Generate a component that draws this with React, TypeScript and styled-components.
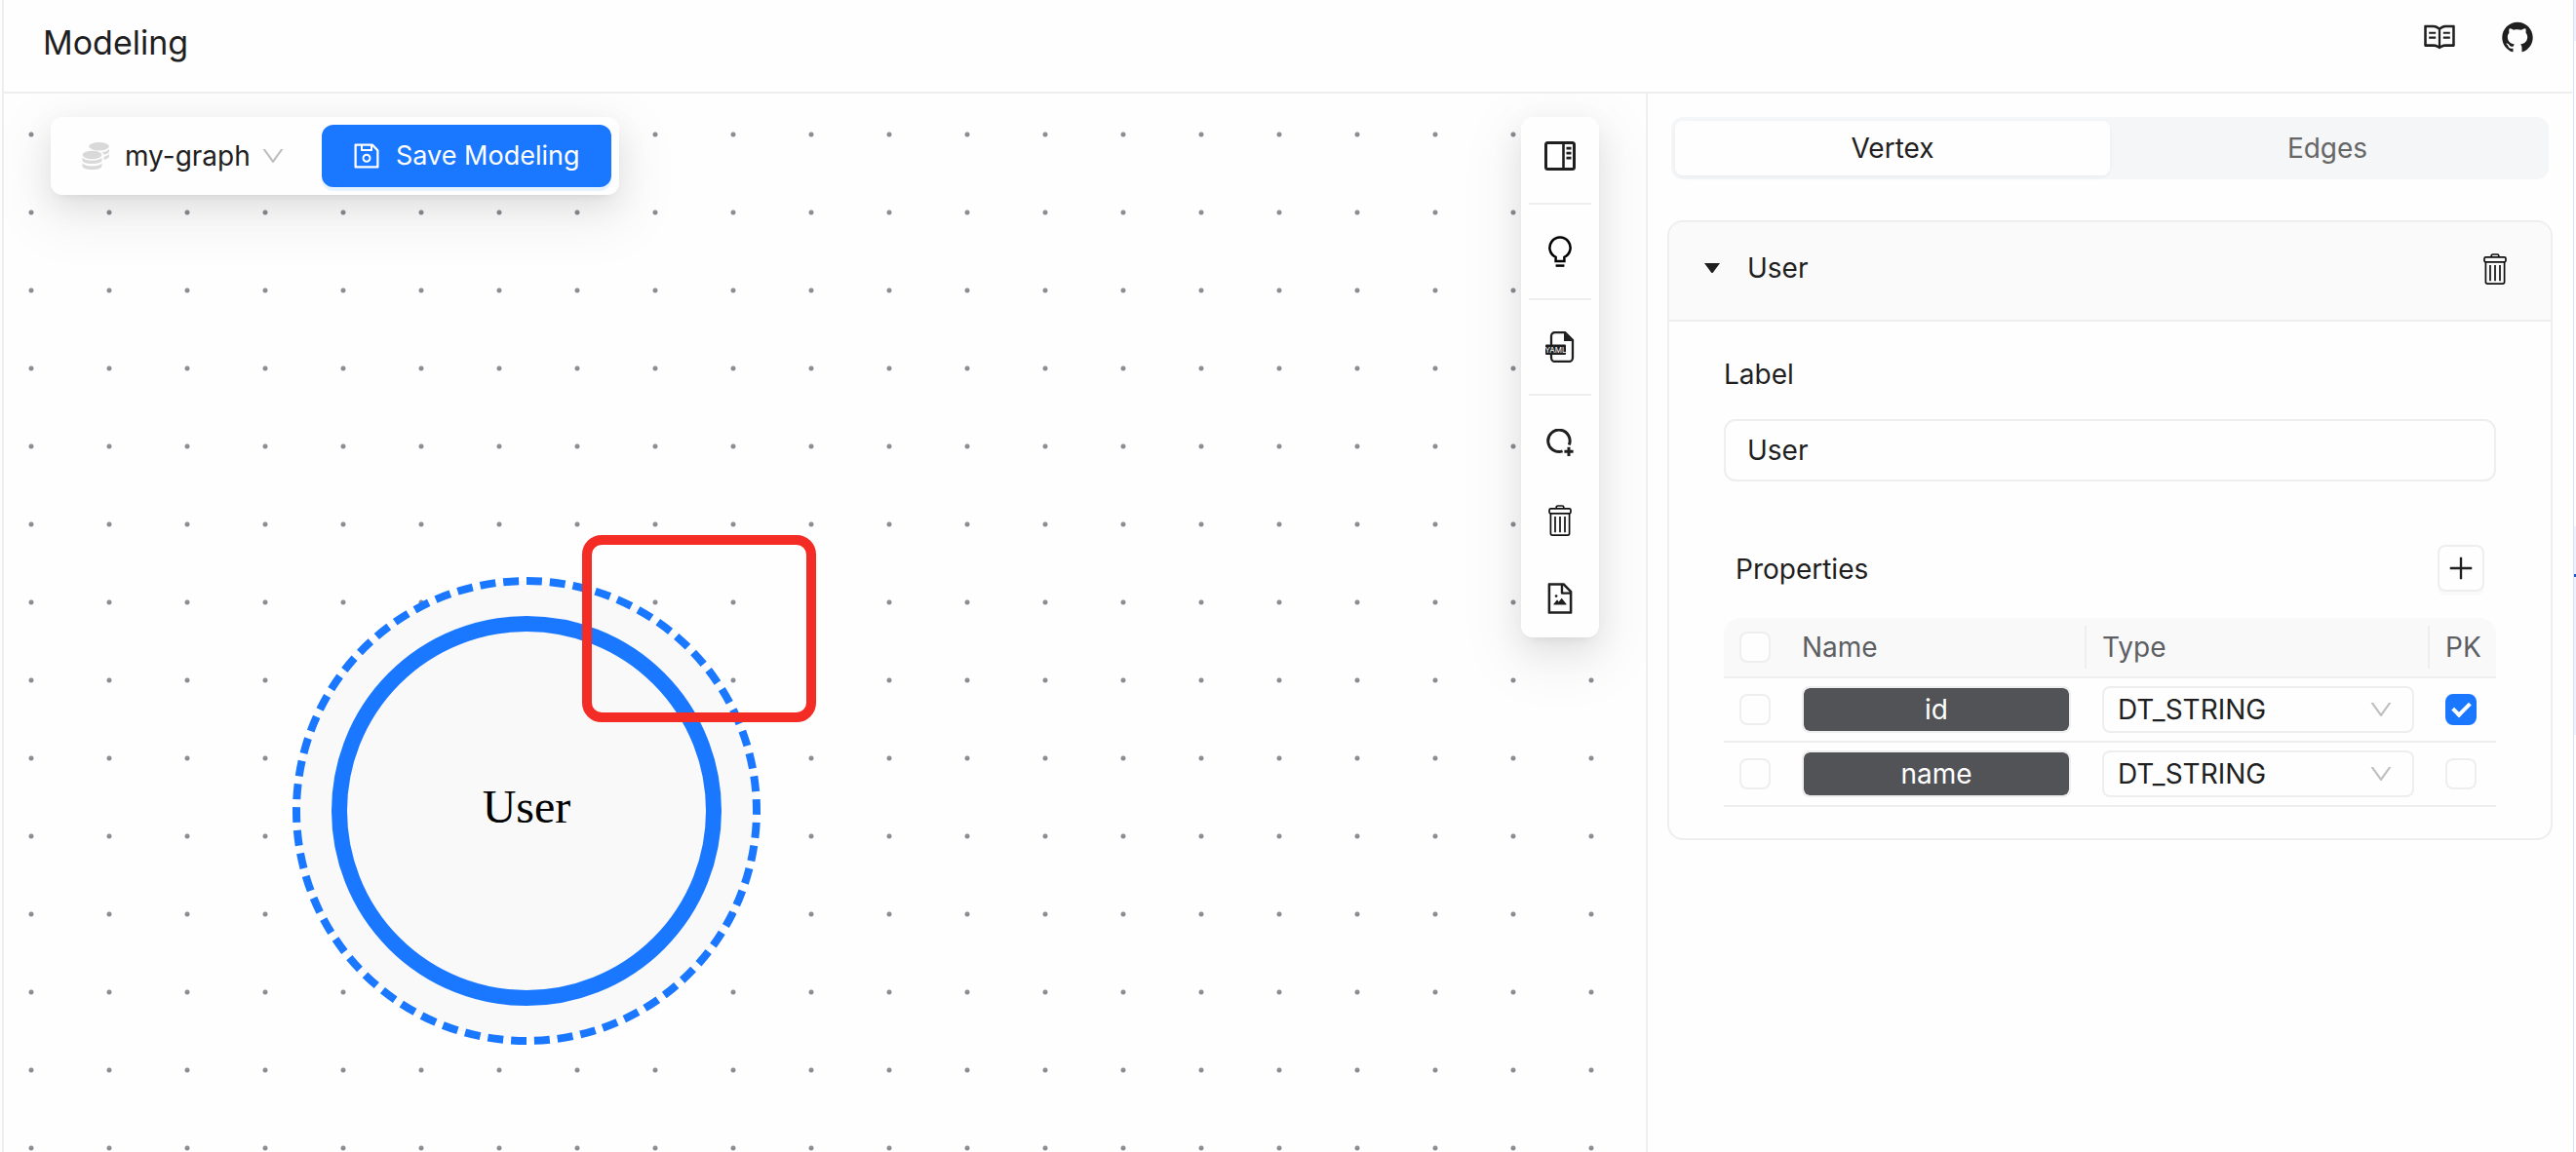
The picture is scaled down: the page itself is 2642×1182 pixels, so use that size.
import React, { useState } from 'react';
import styled, { createGlobalStyle } from 'styled-components';
import {
  AiFillGithub,
  AiOutlineDown,
  AiOutlineFileImage,
  AiOutlinePlus,
  AiOutlineRead,
  AiOutlineSave,
} from 'react-icons/ai';

const line = '#eeeeee';
const ink = '#1f1f1f';
const primary = '#1a77ff';
const floatShadow =
  '0 12px 32px rgba(0, 0, 0, 0.08), 0 6px 12px -8px rgba(0, 0, 0, 0.12), 0 18px 56px 16px rgba(0, 0, 0, 0.05)';

const GlobalStyle = createGlobalStyle`
  *, *::before, *::after { box-sizing: border-box; }
  body {
    margin: 0;
    background: #fefefe;
    color: ${ink};
    font-family: Inter, "Liberation Sans", sans-serif;
    font-size: 28px;
    line-height: 44px;
  }
  button, input, select { font: inherit; color: inherit; margin: 0; }
  button { padding: 0; border: 0; background: none; cursor: pointer; }
  svg { display: block; }
`;

const Window = styled.div`
  display: flex;
  min-height: 100vh;
  padding-left: 2px;
`;

const Page = styled.div`
  flex: 1;
  min-width: 0;
  display: flex;
  flex-direction: column;
  border-left: 2px solid ${line};
`;

const WindowEdge = styled.div`
  width: 3px;
  margin-left: 1px;
  border-left: 1px solid #d5e1fb;
  background: linear-gradient(#edf2fe 42px, #fdfeff 42px 540px, #edf2fe 540px 589px, #1d54c4 589px 592px, #edf2fe 592px 754px, #fdfeff 754px);
`;

const Header = styled.header`
  display: flex;
  justify-content: space-between;
  height: 96px;
  padding: 0 38px 0 40px;
  border-bottom: 2px solid ${line};
`;

const Title = styled.h1`
  margin: 0;
  font-size: 34px;
  font-weight: 400;
  line-height: 88px;
`;

const HeaderLinks = styled.nav`
  display: flex;
  gap: 44px;
  padding-top: 20px;
`;

const HeaderLink = styled.a`
  width: 36px;
  height: 36px;
  color: ${ink};
`;

const Body = styled.div`
  flex: 1;
  display: flex;
`;

const Canvas = styled.main`
  position: relative;
  flex: 1;
  min-width: 0;
  overflow: hidden;
  display: flex;
  justify-content: space-between;
  align-items: flex-start;
  padding: 24px 48px;
  background: radial-gradient(circle at 28px 42px, #8b8b95 2px, rgba(145, 145, 154, 0) 3px) 0 0 / 80px 80px;
`;

const NodeDrawing = styled.svg`
  position: absolute;
  left: 296px;
  top: 496px;
`;

const NodeName = styled.text`
  font-family: "Liberation Serif", "Times New Roman", serif;
  font-size: 48px;
  text-anchor: middle;
  fill: #000;
`;

const Highlight = styled.div`
  position: absolute;
  left: 593px;
  top: 453px;
  width: 240px;
  height: 192px;
  border: 10px solid #f32d25;
  border-radius: 20px;
`;

const GraphBar = styled.div`
  position: relative;
  display: flex;
  align-items: center;
  padding: 8px;
  border-radius: 12px;
  background: #fefefe;
  box-shadow: ${floatShadow};
`;

const GraphPicker = styled.label`
  display: grid;
  grid-template-columns: 68px 138px 64px;
  align-items: center;
  height: 64px;
  color: #bfbfbf;

  > svg { grid-row: 1; pointer-events: none; }
  > svg:first-child { grid-column: 1; margin-left: 24px; }
  > svg:last-child { grid-column: 3; }
`;

const PlainSelect = styled.select`
  grid-row: 1;
  grid-column: 1 / -1;
  height: 64px;
  padding: 0 0 0 68px;
  border: 0;
  background: none;
  appearance: none;
  color: ${ink};
  outline: 0;
`;

const SaveButton = styled.button`
  display: flex;
  align-items: center;
  gap: 14px;
  height: 64px;
  padding: 0 32px 0 30px;
  border-radius: 12px;
  background: ${primary};
  box-shadow: 0 4px 0 rgba(5, 145, 255, 0.1);
  color: #fff;
  font-size: 27px;
`;

const ToolRail = styled.div`
  position: relative;
  display: flex;
  flex-direction: column;
  width: 80px;
  border-radius: 12px;
  background: #fefefe;
  box-shadow: ${floatShadow};
`;

const ToolButton = styled.button`
  display: grid;
  place-items: center;
  height: 80px;
`;

const RailDivider = styled.hr`
  width: 64px;
  height: 2px;
  margin: 8px;
  border: 0;
  background: ${line};
`;

const Panel = styled.aside`
  flex: 0 0 950px;
  padding: 24px 20px;
  border-left: 2px solid ${line};
`;

const Segmented = styled.div`
  display: flex;
  margin: 0 4px 42px;
  padding: 4px;
  border-radius: 12px;
  background: #f4f6f8;
`;

const Segment = styled.button<{ $active: boolean }>`
  flex: 1;
  height: 56px;
  border-radius: 8px;
  background: ${(p) => (p.$active ? '#fefefe' : 'transparent')};
  box-shadow: ${(p) => (p.$active ? '0 2px 4px rgba(0, 0, 0, 0.03), 0 2px 12px -2px rgba(0, 0, 0, 0.02)' : 'none')};
  color: ${(p) => (p.$active ? ink : '#666666')};
`;

const Card = styled.section`
  border: 2px solid ${line};
  border-radius: 16px;
  overflow: hidden;
`;

const CardHeader = styled.header`
  display: flex;
  justify-content: space-between;
  align-items: center;
  height: 102px;
  padding: 0 45px 0 36px;
  border-bottom: 2px solid ${line};
  background: #fafafa;
`;

const CardToggle = styled.button`
  display: flex;
  align-items: center;
  gap: 28px;
  padding-bottom: 7px;
`;

const IconButton = styled.button`
  display: grid;
  place-items: center;
  padding-bottom: 4px;
`;

const CardBody = styled.div`
  display: flex;
  flex-direction: column;
  padding: 32px 56px;
`;

const FieldLabel = styled.label`
  margin-bottom: 24px;
`;

const TextInput = styled.input`
  width: 100%;
  height: 64px;
  padding: 0 22px;
  border: 2px solid ${line};
  border-radius: 12px;
  background: none;
  outline: 0;
`;

const PropertiesBar = styled.div`
  display: flex;
  justify-content: space-between;
  align-items: center;
  margin: 65px 0 27px;
  padding: 0 12px;
`;

const PropertiesTitle = styled.h2`
  margin: 0;
  font-size: 28px;
  font-weight: 400;
  line-height: 46px;
  padding-top: 2px;
`;

const AddButton = styled.button`
  display: grid;
  place-items: center;
  width: 48px;
  height: 48px;
  border: 2px solid ${line};
  border-radius: 8px;
  box-shadow: 0 4px 0 rgba(0, 0, 0, 0.02);
`;

const Table = styled.table`
  width: 100%;
  border-collapse: separate;
  border-spacing: 0;
  table-layout: fixed;
`;

const SelectionCol = styled.col`width: 64px;`;
const NameCol = styled.col`width: 308px;`;
const KeyCol = styled.col`width: 68px;`;

const HeadCell = styled.th<{ $divided?: boolean }>`
  height: 62px;
  padding: 0 16px;
  border-bottom: 2px solid ${line};
  background: ${(p) =>
    p.$divided ? `linear-gradient(${line}, ${line}) right 8px / 2px 44px no-repeat, #f9f9f9` : '#f9f9f9'};
  color: #5c5f63;
  font-weight: 400;
  text-align: left;

  &:first-child { border-top-left-radius: 16px; }
  &:last-child { border-top-right-radius: 16px; }
`;

const Cell = styled.td`
  height: 66px;
  padding: 0 16px;
  border-bottom: 2px solid ${line};
`;

const Checkbox = styled.input.attrs({ type: 'checkbox' })`
  display: block;
  width: 32px;
  height: 32px;
  border: 2px solid ${line};
  border-radius: 8px;
  background: #fefefe;
  appearance: none;

  &:checked {
    display: grid;
    place-items: center;
    border-color: ${primary};
    background: ${primary};
  }
  &:checked::after {
    content: '';
    width: 11px;
    height: 18px;
    margin-bottom: 4px;
    border: solid #fff;
    border-width: 0 4px 4px 0;
    transform: rotate(45deg);
  }
`;

const NameInput = styled.input`
  display: block;
  width: 100%;
  height: 48px;
  padding: 0;
  border: 2px solid ${line};
  border-radius: 8px;
  background: #525357;
  background-clip: padding-box;
  color: #fff;
  text-align: center;
  outline: 0;
`;

const TypePicker = styled.div`
  display: grid;
  grid-template-columns: 1fr 48px;
  align-items: center;
  color: #bfbfbf;

  > svg { grid-area: 1 / 2; pointer-events: none; }
`;

const TypeSelect = styled.select`
  grid-area: 1 / 1 / 2 / 3;
  width: 100%;
  height: 48px;
  padding: 0 14px;
  border: 2px solid ${line};
  border-radius: 8px;
  background: none;
  appearance: none;
  color: ${ink};
  outline: 0;
`;

const TrashIcon = () => (
  <svg width="24" height="32" viewBox="0 0 24 32" fill="none" stroke="#111" strokeWidth="1.7" strokeLinejoin="round">
    <path d="M8.2 3.8V2.6C8.2 1.6 8.9 1 9.8 1h4.4c.9 0 1.6.6 1.6 1.6v1.2" />
    <rect x="1" y="3.8" width="22" height="5" rx="1.6" />
    <path d="M2.4 8.8v20.4c0 1.1.8 1.9 1.9 1.9h15.4c1.1 0 1.9-.8 1.9-1.9V8.8M7 12v16.2M12 12v16.2M17 12v16.2" />
  </svg>
);

const PanelIcon = () => (
  <svg width="32" height="30" viewBox="0 0 32 30" fill="none" stroke={ink}>
    <rect x="1.5" y="1.5" width="29" height="27" rx="2" strokeWidth="3" />
    <path d="M19.5 2v26" strokeWidth="2.6" />
    <path d="M22.5 7.2h5M22.5 12.2h5M22.5 17.2h5" strokeWidth="2.8" />
  </svg>
);

const BulbIcon = () => (
  <svg width="24" height="32" viewBox="0 0 24 32" fill="none" stroke="#000" strokeWidth="2.5">
    <path d="M7.6 26v-4.2A10.6 10.6 0 1 1 16.4 21.8V26z" />
    <path d="M7.6 30.6h8.8" />
  </svg>
);

const YamlIcon = () => (
  <svg width="32" height="32" viewBox="0 0 32 32">
    <path
      d="M7 14V5a4 4 0 0 1 4-4h10l8 8v18a4 4 0 0 1-4 4H11a4 4 0 0 1-4-4v-3"
      fill="none"
      stroke={ink}
      strokeWidth="2.3"
    />
    <path d="M20 1v9h9z" fill={ink} />
    <rect x="1" y="13.5" width="21" height="10.5" rx="1" fill={ink} />
    <text x="11.5" y="21.6" fill="#fff" fontSize="8" fontFamily="Inter, sans-serif" textAnchor="middle">
      YAML
    </text>
  </svg>
);

const AddNodeIcon = () => (
  <svg width="28" height="28" viewBox="0 0 28 28" fill="none" stroke={ink} strokeWidth="3">
    <path d="M16.6 22.9A11.2 11.2 0 1 1 23.3 16.5" />
    <path d="M23 18.800v9.200M18.400 23.300h9.200" />
  </svg>
);

const CoinsIcon = () => (
  <svg width="28" height="28" viewBox="0 0 28 28" fill="#d9d9d9">
    <ellipse cx="17.5" cy="4.2" rx="10.3" ry="4.2" />
    <ellipse cx="10.5" cy="13" rx="10" ry="4.2" />
    <path d="M28 6.8v2.6c0 1.3-2.3 2.7-5.4 3.4-.3-1.1-1.2-2-2.3-2.6C24 9.8 27 8.5 28 6.8zM28 12v2.6c0 1.3-2.3 2.700-5.400 3.400v-3.200c2.700-.6 4.600-1.600 5.400-2.800z" />
    <path d="M.5 15.800c1.500 1.900 5.400 3 10 3s8.500-1.100 10-3v2.700c0 2.100-4.400 3.500-10 3.500S.5 20.600.5 18.500zM.5 21.400c1.500 1.900 5.400 3 10 3s8.500-1.100 10-3v2.800c0 2.200-4.400 3.800-10 3.800S.5 26.400.5 24.200z" />
  </svg>
);

const CaretIcon = () => (
  <svg width="16" height="10" viewBox="0 0 16 10" fill={ink}>
    <path d="M0 0h16L9 9.4a1.3 1.3 0 0 1-2 0z" />
  </svg>
);

const tools = [
  { label: 'Toggle panel', icon: <PanelIcon />, divided: true },
  { label: 'Hints', icon: <BulbIcon />, divided: true },
  { label: 'Import file', icon: <YamlIcon />, divided: true },
  { label: 'Add vertex', icon: <AddNodeIcon /> },
  { label: 'Clear canvas', icon: <TrashIcon /> },
  { label: 'Export image', icon: <AiOutlineFileImage size={36} color={ink} /> },
];

const initialProperties = [
  { name: 'id', type: 'DT_STRING', key: true },
  { name: 'name', type: 'DT_STRING', key: false },
];

function VertexNode({ name }: { name: string }) {
  return (
    <NodeDrawing width="480" height="480" viewBox="0 0 480 480" aria-label={`${name} vertex`}>
      <circle cx="240" cy="240" r="236" fill="#f9f9f9" />
      <circle
        cx="240"
        cy="240"
        r="236"
        fill="none"
        stroke={primary}
        strokeWidth="8"
        pathLength="1488"
        strokeDasharray="16 8"
        transform="rotate(-90 240 240)"
      />
      <circle cx="240" cy="240" r="192" fill="#f9f9f9" stroke={primary} strokeWidth="16" />
      <NodeName x="240" y="252">{name}</NodeName>
    </NodeDrawing>
  );
}

function PropertiesTable() {
  return (
    <Table>
      <colgroup>
        <SelectionCol />
        <NameCol />
        <col />
        <KeyCol />
      </colgroup>
      <thead>
        <tr>
          <HeadCell><Checkbox aria-label="Select all properties" /></HeadCell>
          <HeadCell $divided>Name</HeadCell>
          <HeadCell $divided>Type</HeadCell>
          <HeadCell>PK</HeadCell>
        </tr>
      </thead>
      <tbody>
        {initialProperties.map((property) => (
          <tr key={property.name}>
            <Cell><Checkbox aria-label={`Select ${property.name}`} /></Cell>
            <Cell><NameInput aria-label="Property name" defaultValue={property.name} /></Cell>
            <Cell>
              <TypePicker>
                <TypeSelect aria-label={`Type of ${property.name}`} defaultValue={property.type}>
                  <option>DT_STRING</option>
                </TypeSelect>
                <AiOutlineDown size={28} />
              </TypePicker>
            </Cell>
            <Cell><Checkbox aria-label={`${property.name} is primary key`} defaultChecked={property.key} /></Cell>
          </tr>
        ))}
      </tbody>
    </Table>
  );
}

export default function App() {
  const [tab, setTab] = useState('Vertex');
  const [label, setLabel] = useState('User');

  return (
    <>
      <GlobalStyle />
      <Window>
        <Page>
          <Header>
            <Title>Modeling</Title>
            <HeaderLinks>
              <HeaderLink href="#docs" aria-label="Documentation"><AiOutlineRead size={36} /></HeaderLink>
              <HeaderLink href="#github" aria-label="GitHub"><AiFillGithub size={36} /></HeaderLink>
            </HeaderLinks>
          </Header>
          <Body>
            <Canvas>
              <VertexNode name={label} />
              <Highlight />
              <GraphBar>
                <GraphPicker>
                  <CoinsIcon />
                  <PlainSelect aria-label="Graph">
                    <option>my-graph</option>
                  </PlainSelect>
                  <AiOutlineDown size={28} />
                </GraphPicker>
                <SaveButton>
                  <AiOutlineSave size={32} />
                  Save Modeling
                </SaveButton>
              </GraphBar>
              <ToolRail>
                {tools.map((tool) => (
                  <React.Fragment key={tool.label}>
                    <ToolButton aria-label={tool.label}>{tool.icon}</ToolButton>
                    {tool.divided && <RailDivider />}
                  </React.Fragment>
                ))}
              </ToolRail>
            </Canvas>
            <Panel>
              <Segmented>
                {['Vertex', 'Edges'].map((name) => (
                  <Segment key={name} $active={tab === name} onClick={() => setTab(name)}>
                    {name}
                  </Segment>
                ))}
              </Segmented>
              <Card>
                <CardHeader>
                  <CardToggle><CaretIcon />{label}</CardToggle>
                  <IconButton aria-label="Delete vertex"><TrashIcon /></IconButton>
                </CardHeader>
                <CardBody>
                  <FieldLabel htmlFor="vertex-label">Label</FieldLabel>
                  <TextInput id="vertex-label" value={label} onChange={(e) => setLabel(e.target.value)} />
                  <PropertiesBar>
                    <PropertiesTitle>Properties</PropertiesTitle>
                    <AddButton aria-label="Add property"><AiOutlinePlus size={32} /></AddButton>
                  </PropertiesBar>
                  <PropertiesTable />
                </CardBody>
              </Card>
            </Panel>
          </Body>
        </Page>
        <WindowEdge />
      </Window>
    </>
  );
}
